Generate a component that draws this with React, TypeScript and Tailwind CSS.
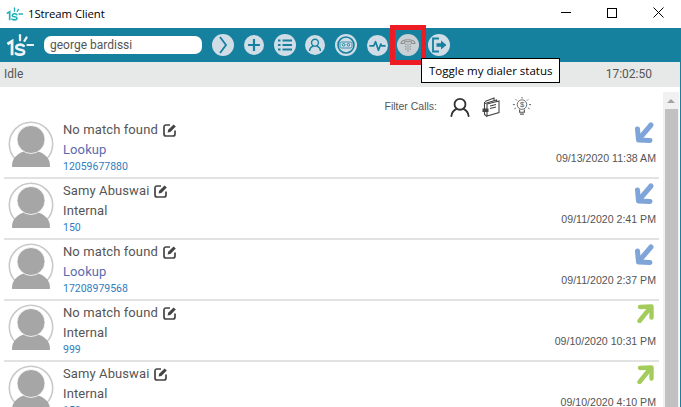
const teal = "#16809f"
const disc = "#d0dde6"

function Logo({ className, color }: { className: string; color: string }) {
  return (
    <svg viewBox="0 0 30 24" className={className} fill="none" stroke={color} strokeLinecap="round">
      <path d="M1.5 11 L6.5 8 V23" strokeWidth="3" strokeLinecap="butt" />
      <path d="M19 13 C17 11 11 11 11 14.5 C11 18 19.5 16 19.5 19.5 C19.5 23 13 23 10.5 21" strokeWidth="2.8" />
      <path d="M15 1.5 V7" strokeWidth="2.4" />
      <path d="M22 4 L19.8 7.5" strokeWidth="2.4" />
      <path d="M23 12 H29" strokeWidth="2.4" />
    </svg>
  )
}

function ToolIcon({ size, className, children }: { size: number; className?: string; children: React.ReactNode }) {
  return (
    <svg width={size} height={size} viewBox="0 0 22 22" className={`shrink-0 ${className ?? ""}`}>
      <circle cx="11" cy="11" r="11" fill={disc} />
      {children}
    </svg>
  )
}

function Avatar() {
  return (
    <svg width="46" height="46" viewBox="0 0 46 46" className="shrink-0">
      <circle cx="23" cy="23" r="21.7" fill="#fff" stroke="#c9c9c9" strokeWidth="1.6" />
      <ellipse cx="23" cy="44" rx="19" ry="14.5" fill="#a6a6a6" />
      <circle cx="23" cy="18.5" r="14" fill="#a6a6a6" stroke="#fff" strokeWidth="0.8" />
    </svg>
  )
}

function EditIcon() {
  return (
    <svg width="14" height="14" viewBox="0 0 14 14" className="shrink-0 -ml-[1px]" fill="none">
      <path d="M12 7.5 V11 C12 12.3 11.3 13 10 13 H3 C1.7 13 1 12.3 1 11 V4 C1 2.7 1.7 2 3 2 H7" stroke="#444" strokeWidth="1.7" />
      <path d="M4.6 9.6 L5.2 6.8 L10.6 1.4 L12.8 3.6 L7.4 9 Z" fill="#444" />
    </svg>
  )
}

function Arrow({ dir }: { dir: "in" | "out" }) {
  if (dir === "in") {
    return (
      <svg width="22" height="24" viewBox="0 0 22 24" fill="none" stroke="#7ea4d8" strokeWidth="5" strokeLinecap="round" strokeLinejoin="round">
        <path d="M18 4 L6 18" />
        <path d="M4.5 8 L5.5 19 L17 19.5" />
      </svg>
    )
  }
  return (
    <svg width="18" height="20" viewBox="0 0 18 20" fill="none" stroke="#a3cc5c" strokeWidth="4.4" strokeLinecap="round" strokeLinejoin="round">
      <path d="M3.5 18 L14 5" />
      <path d="M4 4 L15.5 3.5 L15.5 14.5" />
    </svg>
  )
}

type Call = { name: string; kind: string; num: string; when: string; dir: "in" | "out" }

const calls: Call[] = [
  { name: "No match found", kind: "Lookup", num: "12059677880", when: "09/13/2020 11:38 AM", dir: "in" },
  { name: "Samy Abuswai", kind: "Internal", num: "150", when: "09/11/2020 2:41 PM", dir: "in" },
  { name: "No match found", kind: "Lookup", num: "17208979568", when: "09/11/2020 2:37 PM", dir: "in" },
  { name: "No match found", kind: "Internal", num: "999", when: "09/10/2020 10:31 PM", dir: "out" },
  { name: "Samy Abuswai", kind: "Internal", num: "150", when: "09/10/2020 4:10 PM", dir: "out" },
]

function CallRow({ call }: { call: Call }) {
  return (
    <div className="h-[61px] shrink-0 border-b-2 border-[#e2e2e2] flex">
      <div className="w-[59px] pl-[4px] pt-[3px] shrink-0">
        <Avatar />
      </div>
      <div className="flex-1 font-['Roboto',sans-serif]">
        <div className="flex items-center gap-[6px] mt-[2px] h-[20px] text-[13px] tracking-[0.1px] text-[#555]">
          {call.name}
          <EditIcon />
        </div>
        <div className={`h-[19px] leading-[19px] text-[13px] tracking-[0.1px] ${call.kind === "Lookup" ? "text-[#5b6bb0]" : "text-[#555]"}`}>
          {call.kind}
        </div>
        <div className="h-[16px] leading-[16px] text-[10.5px] text-[#2f7dbd]">{call.num}</div>
      </div>
      <div className="flex flex-col items-end pr-[3px] font-['Liberation_Sans',sans-serif]">
        <div className={`h-[33px] flex items-end ${call.dir === "in" ? "mr-[1px] pb-[6px]" : "mr-[2px] pb-[11px]"}`}>
          <Arrow dir={call.dir} />
        </div>
        <div className="text-[10.6px] leading-[14px] text-[#555]">{call.when}</div>
      </div>
    </div>
  )
}

export default function App() {
  return (
    <div className="relative w-[681px] h-[407px] overflow-hidden bg-white flex flex-col">
      {/* Title bar */}
      <div className="h-[28px] shrink-0 flex items-center pl-[6px] font-['Open_Sans',sans-serif]">
        <Logo className="w-[17px] h-[14px]" color="#1fb3b8" />
        <span className="ml-[5px] text-[11.4px] tracking-[-0.1px] text-black">1Stream Client</span>
        <div className="ml-auto flex items-center h-full pb-[3px]">
          <div className="w-[46px] flex justify-center">
            <div className="w-[10px] h-[1px] bg-black" />
          </div>
          <div className="w-[46px] flex justify-center">
            <div className="w-[10px] h-[10px] border border-black" />
          </div>
          <div className="w-[46px] flex justify-center">
            <svg width="11" height="11" viewBox="0 0 11 11" stroke="#000" strokeWidth="1">
              <path d="M0.5 0.5 L10.5 10.5 M10.5 0.5 L0.5 10.5" />
            </svg>
          </div>
        </div>
      </div>

      {/* Toolbar */}
      <div className="h-[34px] shrink-0 bg-[#16809f] flex items-center pl-[6px]">
        <Logo className="w-[28px] h-[24px]" color="#eef4f6" />
        <div className="ml-[10px] w-[158px] h-[18px] bg-white rounded-[7px] pl-[6px] flex items-center font-['Roboto',sans-serif] text-[12px] text-[#555]">
          george bardissi
        </div>
        <div className="ml-[10px] flex items-center gap-[9px]">
          <ToolIcon size={22}>
            <path d="M8 3 L14 11 L8 19" fill="none" stroke={teal} strokeWidth="1.8" />
          </ToolIcon>
          <ToolIcon size={20} className="ml-[1px]">
            <path d="M11 4.5 V17.5 M4.5 11 H17.5" stroke={teal} strokeWidth="2.4" />
          </ToolIcon>
          <ToolIcon size={22} className="ml-[1px]">
            <path d="M8.5 6.5 H18 M8.5 11 H18 M8.5 15.5 H18" stroke={teal} strokeWidth="2.2" />
            <path d="M4 6.5 H6.5 M4 11 H6.5 M4 15.5 H6.5" stroke={teal} strokeWidth="2.2" />
          </ToolIcon>
          <ToolIcon size={20}>
            <circle cx="11" cy="8.5" r="3.8" fill="none" stroke={teal} strokeWidth="1.5" />
            <path d="M5 17.5 C5 13.5 8 12.5 9 12 M17 17.5 C17 13.5 14 12.5 13 12" fill="none" stroke={teal} strokeWidth="1.5" />
          </ToolIcon>
          <ToolIcon size={22} className="ml-[1px]">
            <circle cx="11" cy="11" r="8" fill="none" stroke={teal} strokeWidth="1.6" />
            <rect x="5" y="8" width="12" height="6" rx="1.5" fill="none" stroke={teal} strokeWidth="0.8" />
            <circle cx="8.6" cy="10.8" r="1.3" fill="none" stroke={teal} strokeWidth="0.9" />
            <circle cx="13.4" cy="10.8" r="1.3" fill="none" stroke={teal} strokeWidth="0.9" />
          </ToolIcon>
          <ToolIcon size={21} className="ml-[1px]">
            <path d="M2.5 11.5 H7 L9 7 L12 16 L14.5 9.5 L15.5 11.5 H19.5" fill="none" stroke={teal} strokeWidth="1.8" strokeLinejoin="round" />
          </ToolIcon>
          <svg width="22" height="22" viewBox="0 0 22 22" className="shrink-0">
            <circle cx="11" cy="11" r="11" fill="#c9d1d6" />
            <path
              d="M4 9.5 C3 4.5 19 4.5 18 9.5 L14.8 9.5 L14.5 7.8 H7.5 L7.2 9.5 Z"
              fill="none"
              stroke="#8c8c8c"
              strokeWidth="1.1"
              strokeLinejoin="round"
            />
            <path
              d="M8 10.5 H9.5 M10.2 10.5 H11.8 M12.5 10.5 H14 M8 12.7 H9.5 M10.2 12.7 H11.8 M12.5 12.7 H14 M8 14.9 H9.5 M10.2 14.9 H11.8 M12.5 14.9 H14 M10.2 17 H11.8"
              stroke="#a2a2a2"
              strokeWidth="1.5"
            />
          </svg>
          <ToolIcon size={22}>
            <path d="M11 4.5 H5 V17.5 H11" fill="none" stroke={teal} strokeWidth="1.8" />
            <path d="M8.5 9.3 H13 V6.5 L18.5 11 L13 15.5 V12.7 H8.5 Z" fill={teal} />
          </ToolIcon>
        </div>
      </div>

      {/* Status bar */}
      <div className="h-[25px] shrink-0 bg-[#e7e9e9] flex items-center justify-between pl-[4px] pr-[29px] pb-[2px] font-['Roboto',sans-serif] text-[12px] text-[#555]">
        <span>Idle</span>
        <span>17:02:50</span>
      </div>

      {/* Call list */}
      <div className="flex-1 min-h-0 flex">
        <div className="flex-1 min-w-0 pl-[4px] pr-[4px] overflow-hidden flex flex-col">
          <div className="h-[31px] shrink-0 flex items-center justify-end pr-[127px] pt-[8px] gap-[12px]">
            <span className="mr-[1px] font-['Liberation_Sans',sans-serif] text-[10.5px] text-[#555]">Filter Calls:</span>
            <svg width="20" height="20" viewBox="0 0 22 22" fill="none" stroke="#333" strokeWidth="2">
              <circle cx="11" cy="8" r="6" />
              <path d="M1.5 21 C2 16 5 14 7 13 M20.5 21 C20 16 17 14 15 13" strokeLinecap="round" />
            </svg>
            <svg width="18" height="20" viewBox="0 0 18 20" fill="none" stroke="#444" strokeWidth="1.1">
              <path d="M3 4.5 L12 1 V3.5" />
              <path d="M3 6.5 L14.5 3 V5" />
              <path d="M5 7 L17 4 V15.5 L5 19 Z" />
              <path d="M2.5 5 V17.5 L5 19.5" />
              <path d="M8 9 L14 7.5 M8 11.5 L14 10" />
              <rect x="0.5" y="11.5" width="6" height="3.5" fill="#444" stroke="none" />
            </svg>
            <svg width="20" height="20" viewBox="0 0 20 21" fill="none" stroke="#555" strokeWidth="0.9">
              <circle cx="10" cy="8" r="5" />
              <path d="M7.5 13 V16 H12.5 V13 M8 18 H12" strokeWidth="1.2" />
              <path d="M10 0 V1.5 M3.5 2.5 L4.7 3.7 M16.5 2.5 L15.3 3.7 M0.5 8 H2.5 M17.5 8 H19.5 M2 12.5 L3.5 11.5 M18 12.5 L16.5 11.5" strokeWidth="1" />
              <text x="10" y="11" textAnchor="middle" fontSize="8" fill="#555" stroke="none" fontFamily="Liberation Sans, sans-serif">$</text>
            </svg>
          </div>
          {calls.map((call, i) => (
            <CallRow key={i} call={call} />
          ))}
        </div>
        {/* Scrollbar */}
        <div className="w-[16px] shrink-0 bg-[#f1f1f1] mr-[2px] mt-[5px] flex flex-col items-center">
          <div className="h-[17px] flex items-center justify-center">
            <div className="w-0 h-0 border-x-[4px] border-x-transparent border-b-[4px] border-b-[#a3a3a3]" />
          </div>
          <div className="w-[13px] flex-1 bg-[#c1c1c1]" />
        </div>
      </div>
      <div className="absolute right-0 top-[28px] bottom-0 w-[1px] bg-[#16809f]" />

      {/* Highlight over the dialer button */}
      <div className="absolute left-[390px] top-[25px] w-[36px] h-[40px] border-[5px] border-[#ed1c24]" />

      {/* Tooltip */}
      <div className="absolute left-[421px] top-[58px] w-[139px] h-[25px] bg-white border border-black flex items-center pl-[7px] font-['Open_Sans',sans-serif] text-[11.5px] text-black">
        Toggle my dialer status
      </div>
    </div>
  )
}
